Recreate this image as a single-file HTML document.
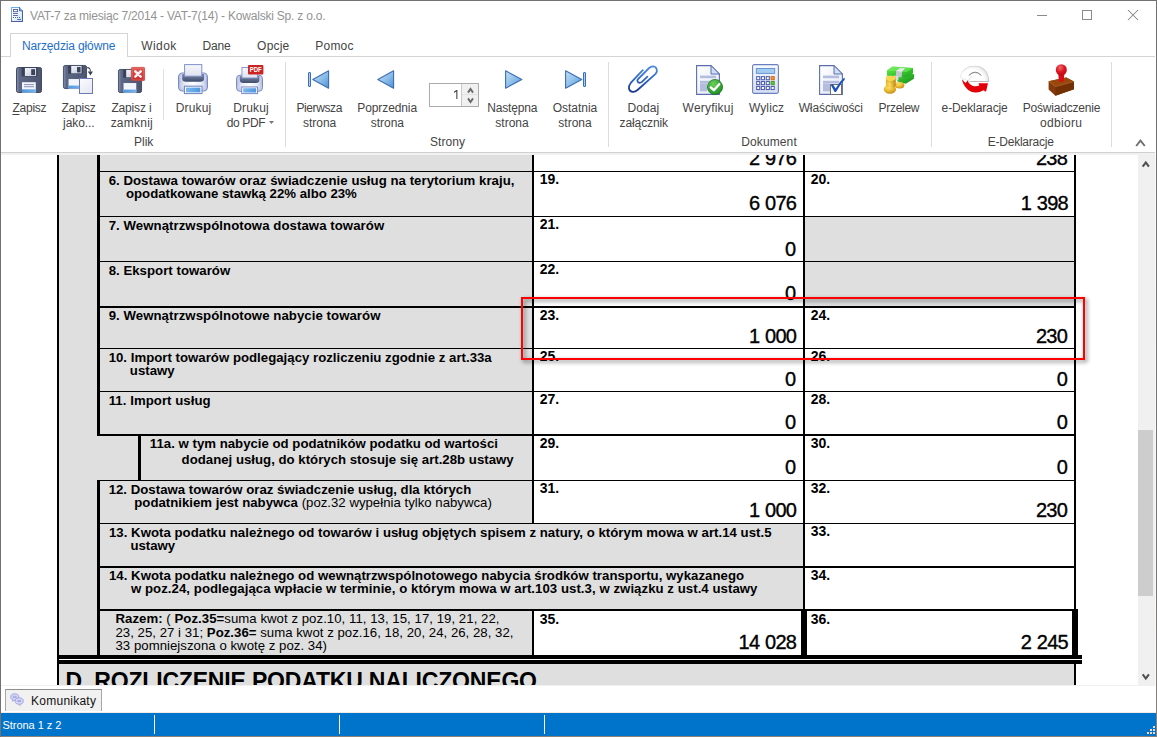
<!DOCTYPE html>
<html><head><meta charset="utf-8"><title>VAT-7</title>
<style>
html,body{margin:0;padding:0}
body{width:1157px;height:737px;position:relative;overflow:hidden;background:#fff;font-family:"Liberation Sans",sans-serif}
.t{position:absolute;white-space:pre;display:block;line-height:30px}
i{position:absolute;display:block}
#doc{position:absolute;left:0;top:155px;width:1138px;height:530px;overflow:hidden;background:#fff}
svg{position:absolute;overflow:visible}
u{text-decoration:underline;text-underline-offset:1.5px}
</style></head><body>
<!-- tab strip -->
<i style="left:1px;top:56px;width:1154px;height:1px;background:#d4d4d4"></i>
<i style="left:10px;top:33px;width:118px;height:24px;background:#fff;border:1px solid #d4d4d4;border-bottom:none;box-sizing:border-box"></i>
<!-- ribbon bottom -->
<i style="left:1px;top:152px;width:1154px;height:1px;background:#d0d0d0"></i>
<i style="left:1px;top:153px;width:1154px;height:2px;background:#f1f1f1"></i>
<!-- ribbon separators -->
<i style="left:163px;top:69px;width:1px;height:51px;background:#e1e1e1"></i>
<i style="left:285px;top:62px;width:1px;height:85px;background:#dcdcdc"></i>
<i style="left:608px;top:62px;width:1px;height:85px;background:#dcdcdc"></i>
<i style="left:931px;top:62px;width:1px;height:85px;background:#dcdcdc"></i>
<i style="left:1111px;top:62px;width:1px;height:85px;background:#dcdcdc"></i>
<!-- spin box -->
<i style="left:429px;top:83px;width:50px;height:24px;box-sizing:border-box;border:1px solid #ababab;background:#fff"></i>
<i style="left:461px;top:84px;width:17px;height:22px;background:#f0f0f0;border-left:1px solid #c8c8c8;box-sizing:border-box"></i>
<!-- document -->
<div id="doc">
<i style="left:59px;top:0px;width:474px;height:531px;background:#dfdfdf"></i>
<i style="left:533px;top:369px;width:270px;height:85px;background:#dfdfdf"></i>
<i style="left:805px;top:62px;width:269px;height:89px;background:#dfdfdf"></i>
<i style="left:59px;top:509px;width:1016px;height:22px;background:#dfdfdf"></i>
<i style="left:99px;top:16px;width:976px;height:1px;background:#000"></i>
<i style="left:99px;top:61px;width:976px;height:1px;background:#000"></i>
<i style="left:99px;top:106px;width:976px;height:1px;background:#000"></i>
<i style="left:99px;top:151px;width:976px;height:2px;background:#000"></i>
<i style="left:99px;top:193px;width:976px;height:1px;background:#000"></i>
<i style="left:99px;top:236px;width:976px;height:1px;background:#000"></i>
<i style="left:97px;top:279px;width:978px;height:2px;background:#000"></i>
<i style="left:97px;top:325px;width:978px;height:1px;background:#000"></i>
<i style="left:99px;top:368px;width:976px;height:1px;background:#000"></i>
<i style="left:99px;top:411px;width:976px;height:2px;background:#000"></i>
<i style="left:99px;top:454px;width:976px;height:2px;background:#000"></i>
<i style="left:57px;top:0px;width:2px;height:531px;background:#000"></i>
<i style="left:97px;top:0px;width:3px;height:281px;background:#000"></i>
<i style="left:97px;top:325px;width:3px;height:176px;background:#000"></i>
<i style="left:138px;top:280px;width:3px;height:46px;background:#000"></i>
<i style="left:532px;top:0px;width:2px;height:368px;background:#000"></i>
<i style="left:532px;top:454px;width:2px;height:47px;background:#000"></i>
<i style="left:803px;top:0px;width:2px;height:455px;background:#000"></i>
<i style="left:1074px;top:0px;width:2px;height:531px;background:#000"></i>
<i style="left:801.4px;top:454px;width:5.6px;height:47px;background:#000"></i>
<i style="left:1072.4px;top:454px;width:5.6px;height:47px;background:#000"></i>
<i style="left:57px;top:500.20000000000005px;width:1025px;height:3.8px;background:#000"></i>
<i style="left:59px;top:504px;width:1023px;height:1.3px;background:#fff"></i>
<i style="left:57px;top:505.29999999999995px;width:1025px;height:4px;background:#000"></i>
<span class="t" style="left:108.67px;top:11px;font-size:13.2px;font-weight:700;letter-spacing:0.045px;">6. Dostawa towarów oraz świadczenie usług na terytorium kraju,</span>
<span class="t" style="left:125.97px;top:24px;font-size:13.2px;font-weight:700;">opodatkowane stawką 22% albo 23%</span>
<span class="t" style="left:108.67px;top:56px;font-size:13.2px;font-weight:700;letter-spacing:0.066px;">7. Wewnątrzwspólnotowa dostawa towarów</span>
<span class="t" style="left:108.67px;top:101px;font-size:13.2px;font-weight:700;letter-spacing:0.035px;">8. Eksport towarów</span>
<span class="t" style="left:108.67px;top:146px;font-size:13.2px;font-weight:700;letter-spacing:0.064px;">9. Wewnątrzwspólnotowe nabycie towarów</span>
<span class="t" style="left:108.67px;top:188px;font-size:13.2px;font-weight:700;letter-spacing:0.021px;">10. Import towarów podlegający rozliczeniu zgodnie z art.33a</span>
<span class="t" style="left:129.87px;top:201px;font-size:13.2px;font-weight:700;">ustawy</span>
<span class="t" style="left:108.67px;top:231px;font-size:13.2px;font-weight:700;letter-spacing:0.058px;">11. Import usług</span>
<span class="t" style="left:149.87px;top:274px;font-size:13.2px;font-weight:700;letter-spacing:0.014px;">11a. w tym nabycie od podatników podatku od wartości</span>
<span class="t" style="left:181.57px;top:290px;font-size:13.2px;font-weight:700;letter-spacing:0.016px;">dodanej usług, do których stosuje się art.28b ustawy</span>
<span class="t" style="left:108.67px;top:320px;font-size:13.2px;font-weight:700;letter-spacing:0.023px;">12. Dostawa towarów oraz świadczenie usług, dla których</span>
<span class="t" style="left:134.27px;top:333px;font-size:13.2px;font-weight:700;letter-spacing:0.011px;">podatnikiem jest nabywca <span style="font-weight:400">(poz.32 wypełnia tylko nabywca)</span></span>
<span class="t" style="left:108.97px;top:363px;font-size:13.2px;font-weight:700;letter-spacing:0.033px;">13. Kwota podatku należnego od towarów i usług objętych spisem z natury, o którym mowa w art.14 ust.5</span>
<span class="t" style="left:130.47px;top:376px;font-size:13.2px;font-weight:700;">ustawy</span>
<span class="t" style="left:108.97px;top:406px;font-size:13.2px;font-weight:700;letter-spacing:0.030px;">14. Kwota podatku należnego od wewnątrzwspólnotowego nabycia środków transportu, wykazanego</span>
<span class="t" style="left:130.97px;top:419px;font-size:13.2px;font-weight:700;letter-spacing:0.052px;">w poz.24, podlegająca wpłacie w terminie, o którym mowa w art.103 ust.3, w związku z ust.4 ustawy</span>
<span class="t" style="left:115.47px;top:449px;font-size:13.2px;letter-spacing:0.043px;"><b>Razem:</b> ( <b>Poz.35=</b>suma kwot z poz.10, 11, 13, 15, 17, 19, 21, 22,</span>
<span class="t" style="left:115.47px;top:463px;font-size:13.2px;letter-spacing:0.026px;">23, 25, 27 i 31; <b>Poz.36=</b> suma kwot z poz.16, 18, 20, 24, 26, 28, 32,</span>
<span class="t" style="left:115.47px;top:476px;font-size:13.2px;letter-spacing:0.034px;">33 pomniejszona o kwotę z poz. 34)</span>
<span class="t" style="left:65.48px;top:511px;font-size:23px;font-weight:700;letter-spacing:-0.180px;">D. ROZLICZENIE PODATKU NALICZONEGO</span>
<span class="t" style="left:539.64px;top:9px;font-size:14px;font-weight:700;">19.</span>
<span class="t" style="left:810.74px;top:9px;font-size:14px;font-weight:700;">20.</span>
<span class="t" style="left:539.64px;top:54px;font-size:14px;font-weight:700;">21.</span>
<span class="t" style="left:539.64px;top:99px;font-size:14px;font-weight:700;">22.</span>
<span class="t" style="left:539.64px;top:145px;font-size:14px;font-weight:700;">23.</span>
<span class="t" style="left:810.74px;top:145px;font-size:14px;font-weight:700;">24.</span>
<span class="t" style="left:539.64px;top:186px;font-size:14px;font-weight:700;">25.</span>
<span class="t" style="left:810.74px;top:186px;font-size:14px;font-weight:700;">26.</span>
<span class="t" style="left:539.64px;top:229px;font-size:14px;font-weight:700;">27.</span>
<span class="t" style="left:810.74px;top:229px;font-size:14px;font-weight:700;">28.</span>
<span class="t" style="left:539.64px;top:273px;font-size:14px;font-weight:700;">29.</span>
<span class="t" style="left:810.74px;top:273px;font-size:14px;font-weight:700;">30.</span>
<span class="t" style="left:539.64px;top:318px;font-size:14px;font-weight:700;">31.</span>
<span class="t" style="left:810.74px;top:318px;font-size:14px;font-weight:700;">32.</span>
<span class="t" style="left:810.74px;top:361px;font-size:14px;font-weight:700;">33.</span>
<span class="t" style="left:810.74px;top:405px;font-size:14px;font-weight:700;">34.</span>
<span class="t" style="left:539.64px;top:449px;font-size:14px;font-weight:700;">35.</span>
<span class="t" style="left:810.74px;top:449px;font-size:14px;font-weight:700;">36.</span>
<span class="t" style="left:748.94px;top:-12px;font-size:20px;letter-spacing:-0.700px;word-spacing:0.8px;-webkit-text-stroke:0.35px #000;">2 976</span>
<span class="t" style="left:1035.92px;top:-12px;font-size:20px;letter-spacing:-0.700px;word-spacing:0.8px;-webkit-text-stroke:0.35px #000;">238</span>
<span class="t" style="left:748.94px;top:33px;font-size:20px;letter-spacing:-0.700px;word-spacing:0.8px;-webkit-text-stroke:0.35px #000;">6 076</span>
<span class="t" style="left:1020.64px;top:33px;font-size:20px;letter-spacing:-0.700px;word-spacing:0.8px;-webkit-text-stroke:0.35px #000;">1 398</span>
<span class="t" style="left:785.07px;top:79px;font-size:20px;letter-spacing:-0.700px;word-spacing:0.8px;-webkit-text-stroke:0.35px #000;">0</span>
<span class="t" style="left:785.07px;top:123px;font-size:20px;letter-spacing:-0.700px;word-spacing:0.8px;-webkit-text-stroke:0.35px #000;">0</span>
<span class="t" style="left:748.94px;top:166px;font-size:20px;letter-spacing:-0.700px;word-spacing:0.8px;-webkit-text-stroke:0.35px #000;">1 000</span>
<span class="t" style="left:1035.92px;top:166px;font-size:20px;letter-spacing:-0.700px;word-spacing:0.8px;-webkit-text-stroke:0.35px #000;">230</span>
<span class="t" style="left:785.07px;top:209px;font-size:20px;letter-spacing:-0.700px;word-spacing:0.8px;-webkit-text-stroke:0.35px #000;">0</span>
<span class="t" style="left:1056.77px;top:209px;font-size:20px;letter-spacing:-0.700px;word-spacing:0.8px;-webkit-text-stroke:0.35px #000;">0</span>
<span class="t" style="left:785.07px;top:252px;font-size:20px;letter-spacing:-0.700px;word-spacing:0.8px;-webkit-text-stroke:0.35px #000;">0</span>
<span class="t" style="left:1056.77px;top:252px;font-size:20px;letter-spacing:-0.700px;word-spacing:0.8px;-webkit-text-stroke:0.35px #000;">0</span>
<span class="t" style="left:785.07px;top:297px;font-size:20px;letter-spacing:-0.700px;word-spacing:0.8px;-webkit-text-stroke:0.35px #000;">0</span>
<span class="t" style="left:1056.77px;top:297px;font-size:20px;letter-spacing:-0.700px;word-spacing:0.8px;-webkit-text-stroke:0.35px #000;">0</span>
<span class="t" style="left:748.94px;top:340px;font-size:20px;letter-spacing:-0.700px;word-spacing:0.8px;-webkit-text-stroke:0.35px #000;">1 000</span>
<span class="t" style="left:1035.92px;top:340px;font-size:20px;letter-spacing:-0.700px;word-spacing:0.8px;-webkit-text-stroke:0.35px #000;">230</span>
<span class="t" style="left:738.53px;top:472px;font-size:20px;letter-spacing:-0.700px;word-spacing:0.8px;-webkit-text-stroke:0.35px #000;">14 028</span>
<span class="t" style="left:1020.64px;top:472px;font-size:20px;letter-spacing:-0.700px;word-spacing:0.8px;-webkit-text-stroke:0.35px #000;">2 245</span>
<div style="position:absolute;left:521px;top:142px;width:564px;height:63px;box-sizing:border-box;border:2px solid #f00;filter:drop-shadow(2px 2px 2px rgba(0,0,0,.55))"></div>
</div>
<!-- scrollbar -->
<i style="left:1138px;top:155px;width:17px;height:531px;background:#f0f0f0"></i><i style="left:1155px;top:155px;width:1px;height:531px;background:#f9f9f9"></i>
<i style="left:1138px;top:430px;width:15px;height:166px;background:#cdcdcd"></i>
<svg style="left:1141.7px;top:160px" width="8" height="8" viewBox="0 0 8 8"><path d="M0.7 6.6 L3.8 2.4 L6.9 6.6" fill="none" stroke="#505050" stroke-width="2.1"/></svg>
<svg style="left:1141.7px;top:673px" width="8" height="8" viewBox="0 0 8 8"><path d="M0.7 1.4 L3.8 5.6 L6.9 1.4" fill="none" stroke="#505050" stroke-width="2.1"/></svg>
<!-- bottom panel -->
<i style="left:1px;top:685px;width:1137px;height:1px;background:#f0f0f0"></i>
<i style="left:5px;top:689px;width:97px;height:22px;box-sizing:border-box;border:1px solid #a6a6a6;border-top-color:#8e8e8e;border-bottom:none;background:#f1f1f1"></i>
<!-- status bar -->
<i style="left:1px;top:712px;width:1155px;height:1px;background:#f3ece6"></i>
<i style="left:1px;top:713px;width:1155px;height:23px;background:#0074cb"></i>
<i style="left:0;top:736px;width:1157px;height:1px;background:#8c8278"></i>
<i style="left:154px;top:715px;width:1px;height:19px;background:#fff"></i>
<i style="left:339px;top:715px;width:1px;height:19px;background:#fff"></i>
<i style="left:544px;top:715px;width:1px;height:19px;background:#fff"></i>
<i style="left:1153px;top:726px;width:2px;height:2px;background:#f3d9c1"></i>
<i style="left:1150px;top:729px;width:2px;height:2px;background:#f3d9c1"></i>
<i style="left:1153px;top:729px;width:2px;height:2px;background:#f3d9c1"></i>
<i style="left:1147px;top:732px;width:2px;height:2px;background:#f3d9c1"></i>
<i style="left:1150px;top:732px;width:2px;height:2px;background:#f3d9c1"></i>
<i style="left:1153px;top:732px;width:2px;height:2px;background:#f3d9c1"></i>
<svg style="left:454px;top:90px" width="4" height="9" viewBox="0 0 4 9"><path d="M0 1.7 L2.3 0 H3.4 V9 H2.3 V1.5 L0 2.9 Z" fill="#444"/></svg>
<svg style="left:11px;top:7px" width="12" height="15" viewBox="0 0 12 15">
<defs><linearGradient id="tig" x1="0" y1="0" x2="1" y2="1"><stop offset="0" stop-color="#ffffff"/><stop offset=".45" stop-color="#f2f9ff"/><stop offset="1" stop-color="#b4dcf8"/></linearGradient>
<linearGradient id="til" x1="0" y1="0" x2="0" y2="1"><stop offset="0" stop-color="#6ab0e8"/><stop offset=".55" stop-color="#78a4dc"/><stop offset="1" stop-color="#5868a8"/></linearGradient></defs>
<path d="M0 0 H8.6 L12 3.4 V15 H0 Z" fill="url(#tig)"/>
<rect x="0" y="0" width="8.6" height="1" fill="#6ab0e8"/>
<rect x="0" y="0" width="1" height="15" fill="url(#til)"/>
<rect x="11" y="3.6" width="1" height="11.4" fill="#4c5c9e"/>
<rect x="0" y="14" width="12" height="1" fill="#4c5c9e"/>
<path d="M8.8 .6 L11.6 3.4 H8.8 Z" fill="#4a9cf2"/>
<path d="M8.5 0 V3.9 H12" fill="none" stroke="#4c5c9e" stroke-width=".9"/>
<rect x="2.4" y="2.5" width="4.2" height="2.2" fill="#fff" stroke="#4c5c9e" stroke-width=".9"/>
<rect x="2" y="6.1" width="4.9" height=".9" fill="#4c5c9e"/>
<rect x="2" y="8.1" width="4.9" height=".9" fill="#4c5c9e"/>
<rect x="2" y="10" width="1" height="1" fill="#4c5c9e"/><rect x="4" y="10" width="1" height="1" fill="#4c5c9e"/><rect x="6" y="10" width="1" height="1" fill="#4c5c9e"/><rect x="8" y="10" width="1" height="1" fill="#4c5c9e"/>
<rect x="6.1" y="12.1" width="3.9" height=".9" fill="#4c5c9e"/>
</svg>
<i style="left:1037px;top:15px;width:10px;height:1px;background:#8a8a8a"></i>
<i style="left:1082px;top:10px;width:10px;height:10px;box-sizing:border-box;border:1px solid #8a8a8a"></i>
<svg style="left:1128px;top:10px" width="10" height="10" viewBox="0 0 10 10"><path d="M0 0 L10 10 M10 0 L0 10" stroke="#858585" stroke-width="1.05"/></svg>
<svg style="left:1135px;top:137.6px" width="11" height="9" viewBox="0 0 11 9"><path d="M1.2 8 L5.5 2.6 L9.8 8" fill="none" stroke="#707070" stroke-width="1.9"/></svg>
<svg style="left:16px;top:67px" width="26" height="26" viewBox="0 0 26 26">
<defs><linearGradient id="f1b" x1="0" y1="0" x2="1" y2="0"><stop offset="0" stop-color="#8892b0"/><stop offset=".12" stop-color="#5d6886"/><stop offset="1" stop-color="#4c556f"/></linearGradient>
<linearGradient id="f1m" x1="0" y1="0" x2="1" y2="1"><stop offset="0" stop-color="#f4f6fb"/><stop offset="1" stop-color="#c3c9dc"/></linearGradient>
<linearGradient id="f1s" x1="0" y1="0" x2="1" y2="0"><stop offset="0" stop-color="#4e97df"/><stop offset="1" stop-color="#76b4ec"/></linearGradient></defs>
<rect x=".5" y=".5" width="25" height="25" rx="1.8" fill="url(#f1b)" stroke="#434b63" stroke-width="1"/>
<rect x="5.6" y="0.6" width="16" height="9" rx="1" fill="#394057"/>
<rect x="8.9" y="1" width="11.2" height="8" fill="url(#f1m)"/>
<rect x="15.2" y="2.2" width="3.8" height="5.8" fill="#3a4159"/>
<rect x="6" y="15.2" width="13.8" height="10.3" fill="#f2f5fb"/>
<rect x="8" y="17.2" width="10" height=".9" fill="#8088b4"/><rect x="8" y="19.3" width="10" height=".9" fill="#8088b4"/>
<rect x="6" y="22.3" width="13.8" height="3.2" fill="url(#f1s)"/>
</svg>
<svg style="left:63px;top:65px" width="24" height="24" viewBox="0 0 26 26">
<defs><linearGradient id="f2b" x1="0" y1="0" x2="1" y2="0"><stop offset="0" stop-color="#8892b0"/><stop offset=".12" stop-color="#5d6886"/><stop offset="1" stop-color="#4c556f"/></linearGradient>
<linearGradient id="f2m" x1="0" y1="0" x2="1" y2="1"><stop offset="0" stop-color="#f4f6fb"/><stop offset="1" stop-color="#c3c9dc"/></linearGradient>
<linearGradient id="f2s" x1="0" y1="0" x2="1" y2="0"><stop offset="0" stop-color="#4e97df"/><stop offset="1" stop-color="#76b4ec"/></linearGradient></defs>
<rect x=".5" y=".5" width="25" height="25" rx="1.8" fill="url(#f2b)" stroke="#434b63" stroke-width="1"/>
<rect x="5.6" y="0.6" width="16" height="9" rx="1" fill="#394057"/>
<rect x="8.9" y="1" width="11.2" height="8" fill="url(#f2m)"/>
<rect x="15.2" y="2.2" width="3.8" height="5.8" fill="#3a4159"/>
<rect x="6" y="15.2" width="13.8" height="10.3" fill="#f2f5fb"/>

<rect x="6" y="22.3" width="13.8" height="3.2" fill="url(#f2s)"/>
</svg>
<i style="left:79px;top:77.5px;width:14px;height:16.5px;box-sizing:border-box;border:1px solid #6d78b4;background:linear-gradient(135deg,#fafbfe,#e4e7f3)"></i>
<svg style="left:86px;top:66px" width="8" height="11" viewBox="0 0 8 11"><path d="M1.2 1.6 Q4.4 1.4 4.4 5.5" fill="none" stroke="#3a4055" stroke-width="1.1"/><path d="M1.8 5.6 H7 L4.4 9.6 Z" fill="#3a4055"/></svg>
<svg style="left:118px;top:69px" width="24" height="24" viewBox="0 0 26 26">
<defs><linearGradient id="f3b" x1="0" y1="0" x2="1" y2="0"><stop offset="0" stop-color="#8892b0"/><stop offset=".12" stop-color="#5d6886"/><stop offset="1" stop-color="#4c556f"/></linearGradient>
<linearGradient id="f3m" x1="0" y1="0" x2="1" y2="1"><stop offset="0" stop-color="#f4f6fb"/><stop offset="1" stop-color="#c3c9dc"/></linearGradient>
<linearGradient id="f3s" x1="0" y1="0" x2="1" y2="0"><stop offset="0" stop-color="#4e97df"/><stop offset="1" stop-color="#76b4ec"/></linearGradient></defs>
<rect x=".5" y=".5" width="25" height="25" rx="1.8" fill="url(#f3b)" stroke="#434b63" stroke-width="1"/>
<rect x="5.6" y="0.6" width="16" height="9" rx="1" fill="#394057"/>
<rect x="8.9" y="1" width="11.2" height="8" fill="url(#f3m)"/>
<rect x="15.2" y="2.2" width="3.8" height="5.8" fill="#3a4159"/>
<rect x="6" y="15.2" width="13.8" height="10.3" fill="#f2f5fb"/>

<rect x="6" y="22.3" width="13.8" height="3.2" fill="url(#f3s)"/>
</svg>
<svg style="left:131px;top:67px" width="14" height="14" viewBox="0 0 14 14">
<defs><linearGradient id="rx" x1="0" y1="0" x2="0" y2="1"><stop offset="0" stop-color="#e05a55"/><stop offset="1" stop-color="#c62828"/></linearGradient></defs>
<rect x=".4" y=".4" width="13.2" height="13.2" rx="1" fill="url(#rx)" stroke="#c23a3a" stroke-width=".8"/>
<rect x="1.1" y="1.1" width="11.8" height="11.8" rx=".6" fill="none" stroke="#ec8c88" stroke-width=".6" opacity=".8"/>
<path d="M4.3 4.3 L9.7 9.7 M9.7 4.3 L4.3 9.7" stroke="#fdf2f2" stroke-width="2.5" stroke-linecap="round"/></svg>
<svg style="left:178px;top:64px" width="30" height="30" viewBox="0 0 30 30" preserveAspectRatio="none">
<defs><linearGradient id="p1b" x1="0" y1="0" x2="1" y2="0"><stop offset="0" stop-color="#a9b5dc"/><stop offset=".2" stop-color="#e6eaf7"/><stop offset=".5" stop-color="#ffffff"/><stop offset=".8" stop-color="#e6eaf7"/><stop offset="1" stop-color="#a9b5dc"/></linearGradient><linearGradient id="p1v" x1="0" y1="0" x2="0" y2="1"><stop offset="0" stop-color="#c4cdea" stop-opacity=".5"/><stop offset=".5" stop-color="#fff" stop-opacity="0"/><stop offset="1" stop-color="#b4bfe2" stop-opacity=".7"/></linearGradient>
<linearGradient id="p1d" x1="0" y1="0" x2="0" y2="1"><stop offset="0" stop-color="#7a88a8"/><stop offset="1" stop-color="#3f4c6c"/></linearGradient>
<linearGradient id="p1p" x1="0" y1="0" x2="0" y2="1"><stop offset="0" stop-color="#f6f7fb"/><stop offset="1" stop-color="#dfe3f0"/></linearGradient>
<linearGradient id="p1t" x1="0" y1="0" x2="1" y2="0"><stop offset="0" stop-color="#7db8ec"/><stop offset="1" stop-color="#4f97de"/></linearGradient></defs>
<rect x=".6" y="9" width="28.8" height="18" rx="4" fill="url(#p1b)" stroke="#7686c6" stroke-width="1.1"/><rect x="1.2" y="9.6" width="27.6" height="16.8" rx="3.4" fill="url(#p1v)"/>
<path d="M4.2 10 H26 V14.5 Q26 17.8 22 17.8 H8.2 Q4.2 17.8 4.2 14.5 Z" fill="url(#p1d)"/>
<rect x="6.6" y=".6" width="17.2" height="11.6" fill="url(#p1p)" stroke="#8290c8" stroke-width="1"/>
<rect x="6.4" y="22.2" width="17.6" height="7.4" fill="#fff" stroke="#6f7fc0" stroke-width="1"/>
<rect x="8" y="23.6" width="14.4" height="4.8" fill="url(#p1t)"/>
</svg>
<svg style="left:236px;top:67px" width="27" height="27" viewBox="0 0 30 30" preserveAspectRatio="none">
<defs><linearGradient id="p2b" x1="0" y1="0" x2="1" y2="0"><stop offset="0" stop-color="#a9b5dc"/><stop offset=".2" stop-color="#e6eaf7"/><stop offset=".5" stop-color="#ffffff"/><stop offset=".8" stop-color="#e6eaf7"/><stop offset="1" stop-color="#a9b5dc"/></linearGradient><linearGradient id="p2v" x1="0" y1="0" x2="0" y2="1"><stop offset="0" stop-color="#c4cdea" stop-opacity=".5"/><stop offset=".5" stop-color="#fff" stop-opacity="0"/><stop offset="1" stop-color="#b4bfe2" stop-opacity=".7"/></linearGradient>
<linearGradient id="p2d" x1="0" y1="0" x2="0" y2="1"><stop offset="0" stop-color="#7a88a8"/><stop offset="1" stop-color="#3f4c6c"/></linearGradient>
<linearGradient id="p2p" x1="0" y1="0" x2="0" y2="1"><stop offset="0" stop-color="#f6f7fb"/><stop offset="1" stop-color="#dfe3f0"/></linearGradient>
<linearGradient id="p2t" x1="0" y1="0" x2="1" y2="0"><stop offset="0" stop-color="#7db8ec"/><stop offset="1" stop-color="#4f97de"/></linearGradient></defs>
<rect x=".6" y="9" width="28.8" height="18" rx="4" fill="url(#p2b)" stroke="#7686c6" stroke-width="1.1"/><rect x="1.2" y="9.6" width="27.6" height="16.8" rx="3.4" fill="url(#p2v)"/>
<path d="M4.2 10 H26 V14.5 Q26 17.8 22 17.8 H8.2 Q4.2 17.8 4.2 14.5 Z" fill="url(#p2d)"/>
<rect x="6.6" y=".6" width="17.2" height="11.6" fill="url(#p2p)" stroke="#8290c8" stroke-width="1"/>
<rect x="6.4" y="22.2" width="17.6" height="7.4" fill="#fff" stroke="#6f7fc0" stroke-width="1"/>
<rect x="8" y="23.6" width="14.4" height="4.8" fill="url(#p2t)"/>
</svg>
<svg style="left:248px;top:64.6px" width="15.4" height="9.4" viewBox="0 0 15.4 9.4">
<rect x="0" y="0" width="15.4" height="9.4" rx="1" fill="#cc2424"/>
<text x="7.7" y="7.3" font-family="Liberation Sans" font-weight="700" font-size="7.2" fill="#fff" text-anchor="middle" textLength="12" lengthAdjust="spacingAndGlyphs">PDF</text></svg>
<svg style="left:269px;top:121px" width="5" height="3" viewBox="0 0 5 3"><path d="M0 0 H5 L2.5 3 Z" fill="#777"/></svg>
<i style="left:308px;top:72px;width:3px;height:15px;box-sizing:border-box;border:1px solid #3c6db5;background:#a9cff0;border-radius:1px"></i>
<svg style="left:312px;top:70px" width="17.2" height="19" viewBox="0 0 17.2 19">
<defs><linearGradient id="t1" x1="0" y1="0" x2="1" y2="1"><stop offset="0" stop-color="#c4dff5"/><stop offset=".5" stop-color="#8fc0ea"/><stop offset="1" stop-color="#4c90d2"/></linearGradient></defs>
<polygon points="16.599999999999998,0.8 0.8,9.5 16.599999999999998,18.2" fill="url(#t1)" stroke="#3c6db5" stroke-width="1.1" stroke-linejoin="round"/></svg>
<svg style="left:377px;top:70px" width="17.2" height="19" viewBox="0 0 17.2 19">
<defs><linearGradient id="t2" x1="0" y1="0" x2="1" y2="1"><stop offset="0" stop-color="#c4dff5"/><stop offset=".5" stop-color="#8fc0ea"/><stop offset="1" stop-color="#4c90d2"/></linearGradient></defs>
<polygon points="16.599999999999998,0.8 0.8,9.5 16.599999999999998,18.2" fill="url(#t2)" stroke="#3c6db5" stroke-width="1.1" stroke-linejoin="round"/></svg>
<svg style="left:504.6px;top:70px" width="17.6" height="19" viewBox="0 0 17.6 19">
<defs><linearGradient id="t3" x1="0" y1="0" x2="1" y2="1"><stop offset="0" stop-color="#c4dff5"/><stop offset=".5" stop-color="#8fc0ea"/><stop offset="1" stop-color="#4c90d2"/></linearGradient></defs>
<polygon points="0.6,0.8 16.8,9.5 0.6,18.2" fill="url(#t3)" stroke="#3c6db5" stroke-width="1.1" stroke-linejoin="round"/></svg>
<svg style="left:564.5px;top:70px" width="17.6" height="19" viewBox="0 0 17.6 19">
<defs><linearGradient id="t4" x1="0" y1="0" x2="1" y2="1"><stop offset="0" stop-color="#c4dff5"/><stop offset=".5" stop-color="#8fc0ea"/><stop offset="1" stop-color="#4c90d2"/></linearGradient></defs>
<polygon points="0.6,0.8 16.8,9.5 0.6,18.2" fill="url(#t4)" stroke="#3c6db5" stroke-width="1.1" stroke-linejoin="round"/></svg>
<i style="left:583px;top:72px;width:3px;height:15px;box-sizing:border-box;border:1px solid #3c6db5;background:#a9cff0;border-radius:1px"></i>
<svg style="left:467px;top:87px" width="7" height="7" viewBox="0 0 7 7"><path d="M1 5.6 L3.5 2 L6 5.6" fill="none" stroke="#6a6a6a" stroke-width="1.9"/></svg>
<svg style="left:467px;top:97px" width="7" height="7" viewBox="0 0 7 7"><path d="M1 1.4 L3.5 5 L6 1.4" fill="none" stroke="#6a6a6a" stroke-width="1.9"/></svg>
<i style="left:462px;top:94px;width:16px;height:1px;background:#e2e2e2"></i>
<svg style="left:620px;top:60px" width="45" height="38" viewBox="0 0 873 737">
<defs><linearGradient id="pcg" gradientUnits="userSpaceOnUse" x1="0" y1="120" x2="0" y2="630"><stop offset="0" stop-color="#4f8ee0"/><stop offset=".5" stop-color="#3066c2"/><stop offset="1" stop-color="#1c348e"/></linearGradient></defs>
<path d="M442 198 L208 445 C150 520 165 600 240 618 C290 625 320 600 345 578 L690 268 C740 215 715 130 640 125 C600 125 580 140 560 160 L350 372 C320 405 345 450 395 440 C410 436 418 430 425 424 L532 322" fill="none" stroke="url(#pcg)" stroke-width="35" stroke-linecap="round" stroke-linejoin="round"/>
</svg>
<svg style="left:696px;top:65px" width="24" height="30" viewBox="0 0 24 30">
<defs><linearGradient id="d1" x1="0" y1="0" x2="1" y2="1"><stop offset="0" stop-color="#ffffff"/><stop offset="1" stop-color="#e4e9f6"/></linearGradient></defs>
<path d="M.6 .6 H15 L23.4 9 V29.4 H.6 Z" fill="url(#d1)" stroke="#5b6fb0" stroke-width="1.1"/>
<path d="M15 .6 V9 H23.4 Z" fill="#cfe0f5" stroke="#5b6fb0" stroke-width="1" stroke-linejoin="round"/>
<rect x="4" y="10.6" width="16" height="2.6" fill="#b4bde0"/>
<rect x="4" y="15.8" width="16" height="2.6" fill="#b4bde0"/>
<rect x="4" y="18.4" width="7" height="8" fill="#b4bde0"/>
</svg>
<svg style="left:707.3px;top:79.2px" width="16" height="16" viewBox="0 0 16 16">
<defs><radialGradient id="gc" cx=".4" cy=".3" r=".8"><stop offset="0" stop-color="#6ad05a"/><stop offset="1" stop-color="#15861c"/></radialGradient></defs>
<circle cx="8" cy="8" r="7.6" fill="url(#gc)" stroke="#117018" stroke-width=".7"/>
<path d="M3.8 8.4 L6.8 11.2 L12.2 5.2" fill="none" stroke="#fff" stroke-width="2.4" stroke-linecap="round" stroke-linejoin="round"/></svg>
<svg style="left:752px;top:64px" width="27" height="30" viewBox="0 0 27 30">
<defs><linearGradient id="cb" x1="0" y1="0" x2="0" y2="1"><stop offset="0" stop-color="#f7f9fe"/><stop offset="1" stop-color="#d8dff3"/></linearGradient></defs>
<rect x=".6" y=".6" width="25.8" height="28.8" rx="1.6" fill="url(#cb)" stroke="#6a7fc0" stroke-width="1.1"/>
<rect x="4.3" y="4.5" width="18.4" height="4.9" fill="#a4cbf0" stroke="#5f8fd0" stroke-width=".9"/><rect x="4.65" y="12.649999999999999" width="3.1" height="3.1" fill="#fff" stroke="#4e5fae" stroke-width="1.05"/><rect x="9.35" y="12.649999999999999" width="3.1" height="3.1" fill="#fff" stroke="#4e5fae" stroke-width="1.05"/><rect x="14.25" y="12.649999999999999" width="3.1" height="3.1" fill="#fff" stroke="#4e5fae" stroke-width="1.05"/><rect x="19.15" y="12.649999999999999" width="3.1" height="3.1" fill="#f0963a" stroke="#d07420" stroke-width="1.05"/><rect x="4.65" y="17.55" width="3.1" height="3.1" fill="#fff" stroke="#4e5fae" stroke-width="1.05"/><rect x="9.35" y="17.55" width="3.1" height="3.1" fill="#fff" stroke="#4e5fae" stroke-width="1.05"/><rect x="14.25" y="17.55" width="3.1" height="3.1" fill="#fff" stroke="#4e5fae" stroke-width="1.05"/><rect x="19.15" y="17.55" width="3.1" height="3.1" fill="#66c44c" stroke="#46a032" stroke-width="1.05"/><rect x="4.65" y="22.45" width="3.1" height="3.1" fill="#fff" stroke="#4e5fae" stroke-width="1.05"/><rect x="9.35" y="22.45" width="3.1" height="3.1" fill="#fff" stroke="#4e5fae" stroke-width="1.05"/><rect x="14.25" y="22.45" width="3.1" height="3.1" fill="#fff" stroke="#4e5fae" stroke-width="1.05"/><rect x="19.15" y="22.45" width="3.1" height="3.1" fill="#fff" stroke="#4e5fae" stroke-width="1.05"/></svg>
<svg style="left:819px;top:65px" width="24" height="30" viewBox="0 0 24 30">
<defs><linearGradient id="d2" x1="0" y1="0" x2="1" y2="1"><stop offset="0" stop-color="#ffffff"/><stop offset="1" stop-color="#e4e9f6"/></linearGradient></defs>
<path d="M.6 .6 H15 L23.4 9 V29.4 H.6 Z" fill="url(#d2)" stroke="#5b6fb0" stroke-width="1.1"/>
<path d="M15 .6 V9 H23.4 Z" fill="#cfe0f5" stroke="#5b6fb0" stroke-width="1" stroke-linejoin="round"/>
<rect x="4" y="10.6" width="16" height="2.6" fill="#b4bde0"/>
<rect x="4" y="15.8" width="16" height="2.6" fill="#b4bde0"/>
<rect x="4" y="18.4" width="7" height="8" fill="#b4bde0"/>
</svg>
<i style="left:830.4px;top:84.2px;width:11.6px;height:10.4px;box-sizing:border-box;border:1.2px solid #707070;background:#fff"></i>
<svg style="left:829px;top:76px" width="17" height="18" viewBox="0 0 17 18"><path d="M1.8 9 L3.8 8 L6.6 12.6 Q10 6 15.4 1.6 L15.8 3.4 Q10.6 9 7 16 L5.6 16 Z" fill="#1c50bc"/></svg>
<svg style="left:880px;top:62px" width="38" height="34" viewBox="0 0 824 737">
<defs><linearGradient id="mg1" x1="0" y1="0" x2="1" y2="1"><stop offset="0" stop-color="#6cec50"/><stop offset=".5" stop-color="#3ccc30"/><stop offset="1" stop-color="#1e9c1c"/></linearGradient>
<linearGradient id="mg2" x1="0" y1="0" x2="1" y2="1"><stop offset="0" stop-color="#48d838"/><stop offset="1" stop-color="#168c18"/></linearGradient>
<radialGradient id="gold" cx=".4" cy=".3" r=".8"><stop offset="0" stop-color="#fbe46a"/><stop offset=".6" stop-color="#e4b028"/><stop offset="1" stop-color="#b87a10"/></radialGradient>
<linearGradient id="gold2" x1="0" y1="0" x2="1" y2="0"><stop offset="0" stop-color="#e8b830"/><stop offset=".4" stop-color="#f8dc58"/><stop offset="1" stop-color="#c08414"/></linearGradient></defs>
<path d="M330 300 L700 250 L742 272 L735 365 L560 472 L380 425 Z" fill="url(#mg2)"/>
<path d="M150 182 L272 95 L715 130 L716 238 L560 332 L150 300 Z" fill="url(#mg1)"/>
<path d="M150 182 L272 95 L715 130 L575 215 Z" fill="#7cf264" opacity=".55"/>
<path d="M350 192 L440 128 L545 138 L470 215 L462 332 L355 312 Z" fill="#e6e6ee"/>
<path d="M350 192 L470 215 L462 332 L355 312 Z" fill="#c4c4d0"/>
<path d="M300 288 L402 312 L396 402 L335 382 Z" fill="#dcdce6"/>
<ellipse cx="425" cy="505" rx="102" ry="72" fill="url(#gold)"/>
<ellipse cx="215" cy="590" rx="132" ry="98" fill="url(#gold)"/>
<path d="M128 352 Q128 300 235 300 Q342 300 342 352 V500 Q342 555 235 555 Q128 555 128 500 Z" fill="url(#gold2)"/>
<ellipse cx="235" cy="350" rx="104" ry="50" fill="#f6d850"/>
<path d="M132 410 Q235 470 340 410" fill="none" stroke="#c08818" stroke-width="14" opacity=".6"/>
</svg>
<svg style="left:955px;top:60px" width="40" height="38" viewBox="0 0 776 737">
<defs><radialGradient id="eg" gradientUnits="userSpaceOnUse" cx="330" cy="420" r="340"><stop offset="0" stop-color="#ffffff"/><stop offset=".7" stop-color="#ffffff"/><stop offset=".9" stop-color="#ececec"/><stop offset="1" stop-color="#d6d6d6"/></radialGradient>
<filter id="ebl" x="-20%" y="-20%" width="140%" height="140%"><feGaussianBlur stdDeviation="9"/></filter>
<filter id="ebl2" x="-20%" y="-20%" width="140%" height="140%"><feGaussianBlur stdDeviation="14"/></filter></defs>
<path d="M95 330 Q150 118 380 110 Q640 116 664 400 L664 428 L300 428 L250 405 Z" fill="#9a9a9a" filter="url(#ebl2)" opacity=".55"/>
<path d="M100 328 Q152 130 380 122 Q628 128 650 398 L650 414 L300 414 L250 400 Z" fill="url(#eg)"/>
<path d="M268 300 Q390 170 512 300" fill="none" stroke="#777" stroke-width="16" filter="url(#ebl)" opacity=".9"/>
<path d="M272 296 Q390 190 508 296" fill="none" stroke="#555" stroke-width="9" opacity=".75"/>
<path d="M330 312 L252 402" stroke="#999" stroke-width="8" opacity=".7"/>
<path d="M300 416 H648" stroke="#8c8c8c" stroke-width="9" opacity=".75"/>
<path d="M652 330 V414" stroke="#b5b5b5" stroke-width="8" opacity=".6"/>
<path d="M132 372 L205 448 L246 396 Q268 470 350 503 Q420 520 470 496 L458 450 L640 450 L602 616 L548 586 Q450 650 320 618 Q185 560 132 372 Z" fill="#e40008"/>
<path d="M140 395 Q190 560 320 612 Q450 645 546 582" fill="none" stroke="#b00006" stroke-width="8" opacity=".5"/>
</svg>
<svg style="left:1047px;top:63px" width="28" height="33" viewBox="0 0 28 33">
<defs><radialGradient id="sk" cx=".4" cy=".3" r=".8"><stop offset="0" stop-color="#f06a6c"/><stop offset=".5" stop-color="#dc1420"/><stop offset="1" stop-color="#b00812"/></radialGradient></defs>
<path d="M1.6 18.2 L19.2 14.4 L27 18.6 V26.2 L8.4 32.8 L1.6 26.6 Z" fill="#86390a"/>
<path d="M1.6 18.2 L19.2 14.4 L27 18.6 L8.6 23.6 Z" fill="#9a470c"/>
<path d="M8.6 23.6 L27 18.6 V26.2 L8.4 32.8 Z" fill="#743005"/>
<path d="M1.6 18.2 L8.6 23.6 L27 18.6" fill="none" stroke="#d9a070" stroke-width=".5" opacity=".7"/>
<path d="M11.2 9 H17.4 L16.8 18 Q14.4 19.6 11.8 18 Z" fill="#d80c18"/>
<ellipse cx="14.3" cy="6.9" rx="5.5" ry="5.7" fill="url(#sk)"/>
</svg>
<svg style="left:10.2px;top:692.6px" width="14.2" height="13.4" viewBox="0 0 16 15">
<ellipse cx="5.4" cy="4.4" rx="4.6" ry="3.6" fill="#d4d6fa" stroke="#9a9cd8" stroke-width=".9"/>
<path d="M3.2 6.8 L2.8 9.4 L6 7.6" fill="#d4d6fa" stroke="#9a9cd8" stroke-width=".7"/>
<rect x="3.2" y="3.2" width="4.2" height=".7" fill="#8c8ed0"/><rect x="3.2" y="4.8" width="4.2" height=".7" fill="#8c8ed0"/>
<ellipse cx="10.4" cy="9" rx="4.6" ry="3.6" fill="#d4d6fa" stroke="#9a9cd8" stroke-width=".9"/>
<path d="M10 12.2 L11.4 14.4 L12.6 12" fill="#d4d6fa" stroke="#9a9cd8" stroke-width=".7"/>
<rect x="8.2" y="7.8" width="4.2" height=".7" fill="#8c8ed0"/><rect x="8.2" y="9.4" width="4.2" height=".7" fill="#8c8ed0"/>
</svg>
<span class="t" style="left:30.02px;top:1px;font-size:12px;color:#939393;letter-spacing:-0.207px;">VAT-7 za miesiąc 7/2014 - VAT-7(14) - Kowalski Sp. z o.o.</span>
<span class="t" style="left:22.02px;top:31px;font-size:12px;color:#1e6fc8;letter-spacing:-0.133px;">Narzędzia główne</span>
<span class="t" style="left:141.32px;top:31px;font-size:12px;color:#444444;letter-spacing:0.403px;">Widok</span>
<span class="t" style="left:202.52px;top:31px;font-size:12px;color:#444444;letter-spacing:-0.182px;">Dane</span>
<span class="t" style="left:257.12px;top:31px;font-size:12px;color:#444444;letter-spacing:0.200px;">Opcje</span>
<span class="t" style="left:315.32px;top:31px;font-size:12px;color:#444444;letter-spacing:0.200px;">Pomoc</span>
<span class="t" style="left:12.40px;top:93px;font-size:12px;color:#444444;letter-spacing:-0.233px;"><u>Z</u>apisz</span>
<span class="t" style="left:61.50px;top:93px;font-size:12px;color:#444444;letter-spacing:-0.231px;">Zapisz</span>
<span class="t" style="left:63.12px;top:108px;font-size:12px;color:#444444;letter-spacing:-0.108px;">jako...</span>
<span class="t" style="left:111.43px;top:93px;font-size:12px;color:#444444;letter-spacing:-0.173px;">Zapisz i</span>
<span class="t" style="left:110.64px;top:108px;font-size:12px;color:#444444;letter-spacing:0.239px;">zamknij</span>
<span class="t" style="left:175.79px;top:93px;font-size:12px;color:#444444;letter-spacing:0.145px;">Drukuj</span>
<span class="t" style="left:233.29px;top:93px;font-size:12px;color:#444444;letter-spacing:0.145px;">Drukuj</span>
<span class="t" style="left:226.78px;top:108px;font-size:12px;color:#444444;letter-spacing:-0.371px;">do PDF</span>
<span class="t" style="left:134.06px;top:127px;font-size:12px;color:#444444;letter-spacing:-0.021px;">Plik</span>
<span class="t" style="left:296.38px;top:93px;font-size:12px;color:#444444;letter-spacing:-0.378px;">Pierwsza</span>
<span class="t" style="left:302.96px;top:108px;font-size:12px;color:#444444;letter-spacing:-0.017px;">strona</span>
<span class="t" style="left:357.32px;top:93px;font-size:12px;color:#444444;letter-spacing:-0.106px;">Poprzednia</span>
<span class="t" style="left:370.76px;top:108px;font-size:12px;color:#444444;letter-spacing:-0.017px;">strona</span>
<span class="t" style="left:487.24px;top:93px;font-size:12px;color:#444444;letter-spacing:-0.152px;">Następna</span>
<span class="t" style="left:495.36px;top:108px;font-size:12px;color:#444444;letter-spacing:-0.017px;">strona</span>
<span class="t" style="left:552.75px;top:93px;font-size:12px;color:#444444;letter-spacing:-0.030px;">Ostatnia</span>
<span class="t" style="left:558.36px;top:108px;font-size:12px;color:#444444;letter-spacing:-0.017px;">strona</span>
<span class="t" style="left:430.04px;top:127px;font-size:12px;color:#444444;letter-spacing:0.045px;">Strony</span>
<span class="t" style="left:627.56px;top:93px;font-size:12px;color:#444444;letter-spacing:0.080px;">Dodaj</span>
<span class="t" style="left:619.48px;top:108px;font-size:12px;color:#444444;letter-spacing:-0.089px;">załącznik</span>
<span class="t" style="left:682.62px;top:93px;font-size:12px;color:#444444;letter-spacing:0.204px;">Weryfikuj</span>
<span class="t" style="left:748.89px;top:93px;font-size:12px;color:#444444;letter-spacing:0.133px;">Wylicz</span>
<span class="t" style="left:798.67px;top:93px;font-size:12px;color:#444444;letter-spacing:-0.108px;">Właściwości</span>
<span class="t" style="left:878.57px;top:93px;font-size:12px;color:#444444;letter-spacing:-0.304px;">Przelew</span>
<span class="t" style="left:741.23px;top:127px;font-size:12px;color:#444444;letter-spacing:0.120px;">Dokument</span>
<span class="t" style="left:941.62px;top:93px;font-size:12px;color:#444444;letter-spacing:-0.108px;">e-Deklaracje</span>
<span class="t" style="left:1022.68px;top:93px;font-size:12px;color:#444444;letter-spacing:-0.184px;">Poświadczenie</span>
<span class="t" style="left:1040.03px;top:108px;font-size:12px;color:#444444;letter-spacing:0.318px;">odbioru</span>
<span class="t" style="left:987.75px;top:127px;font-size:12px;color:#444444;letter-spacing:-0.237px;">E-Deklaracje</span>
<span class="t" style="left:31.12px;top:686px;font-size:12px;color:#111;letter-spacing:0.236px;">Komunikaty</span>
<span class="t" style="left:2.46px;top:710px;font-size:11px;color:#fff;letter-spacing:-0.037px;">Strona 1 z 2</span>
<!-- window frame -->
<i style="left:0;top:0;width:1157px;height:1px;background:#717171"></i>
<i style="left:0;top:0;width:1px;height:737px;background:#717171"></i>
<i style="left:1156px;top:0;width:1px;height:737px;background:linear-gradient(#717171,#777 80%,#8c8278)"></i>
</body></html>
